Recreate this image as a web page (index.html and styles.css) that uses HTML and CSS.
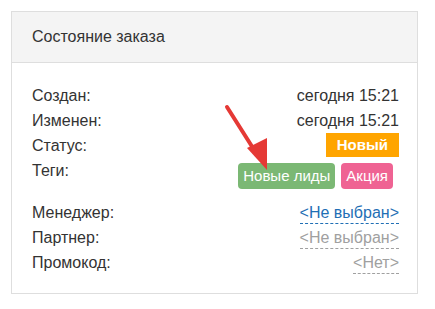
FILE: index.html
```html
<!DOCTYPE html>
<html lang="ru">

<head>
  <meta charset="UTF-8">
  <meta name="viewport" content="width=device-width, initial-scale=1.0">
  <title>Состояние заказа</title>
  <link rel="stylesheet" href="styles.css">
</head>

<body>
  <div class="card">
    <div class="card-head">Состояние заказа</div>
    <div class="card-body">
      <div class="rows">
        <div class="row">
          <span class="label">Создан:</span>
          <span class="value">сегодня 15:21</span>
        </div>
        <div class="row">
          <span class="label">Изменен:</span>
          <span class="value">сегодня 15:21</span>
        </div>
        <div class="row">
          <span class="label">Статус:</span>
          <span class="status">Новый</span>
        </div>
        <div class="row row-tags">
          <span class="label">Теги:</span>
          <div class="tags">
            <span class="tag tag-green">Новые лиды</span>
            <span class="tag tag-pink">Акция</span>
          </div>
        </div>
      </div>
      <div class="rows">
        <div class="row">
          <span class="label">Менеджер:</span>
          <span class="link">&lt;Не выбран&gt;</span>
        </div>
        <div class="row">
          <span class="label">Партнер:</span>
          <span class="link link-muted">&lt;Не выбран&gt;</span>
        </div>
        <div class="row">
          <span class="label">Промокод:</span>
          <span class="link link-muted">&lt;Нет&gt;</span>
        </div>
      </div>
    </div>

    <!-- red pointer arrow -->
    <svg class="arrow" width="50" height="70" viewBox="0 0 50 70">
      <line x1="3" y1="3" x2="34" y2="52" stroke="#e53935" stroke-width="4" stroke-linecap="round" />
      <polygon points="23,44 43,34 43,66" fill="#e53935" />
    </svg>
  </div>
</body>

</html>
```

FILE: styles.css
```css
* {
  margin: 0;
  box-sizing: border-box;
}

body {
  font-family: "Liberation Sans", Arial, sans-serif;
  font-size: 16px;
  color: #333;
  background: white;
  padding: 11px 17px 11px 11px;
}

.card {
  position: relative;
  border: 1px solid #dedede;
  background: white;
}

.card-head {
  height: 51px;
  line-height: 50px;
  padding-left: 20px;
  background: #f4f4f4;
  border-bottom: 1px solid #dedede;
}

.card-body {
  padding: 20px 18px 18px 20px;
}

.rows + .rows {
  margin-top: 11px;
}

.row {
  display: flex;
  justify-content: space-between;
  align-items: flex-start;
  line-height: 25px;
}

.status {
  background: #ffa500;
  color: white;
  font-weight: bold;
  font-size: 15px;
  line-height: 24px;
  padding: 0 11px;
}

.tags {
  display: flex;
  gap: 6px;
  margin-top: 5px;
  margin-right: 6px;
}

.tag {
  color: white;
  font-size: 15px;
  line-height: 26px;
  padding: 0 5px;
  border-radius: 4px;
}

.tag-green {
  background: #7bb874;
}

.tag-pink {
  background: #ef6393;
}

.link {
  color: #1f6fb5;
  border-bottom: 1px dashed #1f6fb5;
  line-height: 20px;
  margin-top: 3px;
}

.link-muted {
  color: #a0a0a0;
  border-bottom-color: #a0a0a0;
}

.arrow {
  position: absolute;
  left: 212px;
  top: 92px;
}
```
